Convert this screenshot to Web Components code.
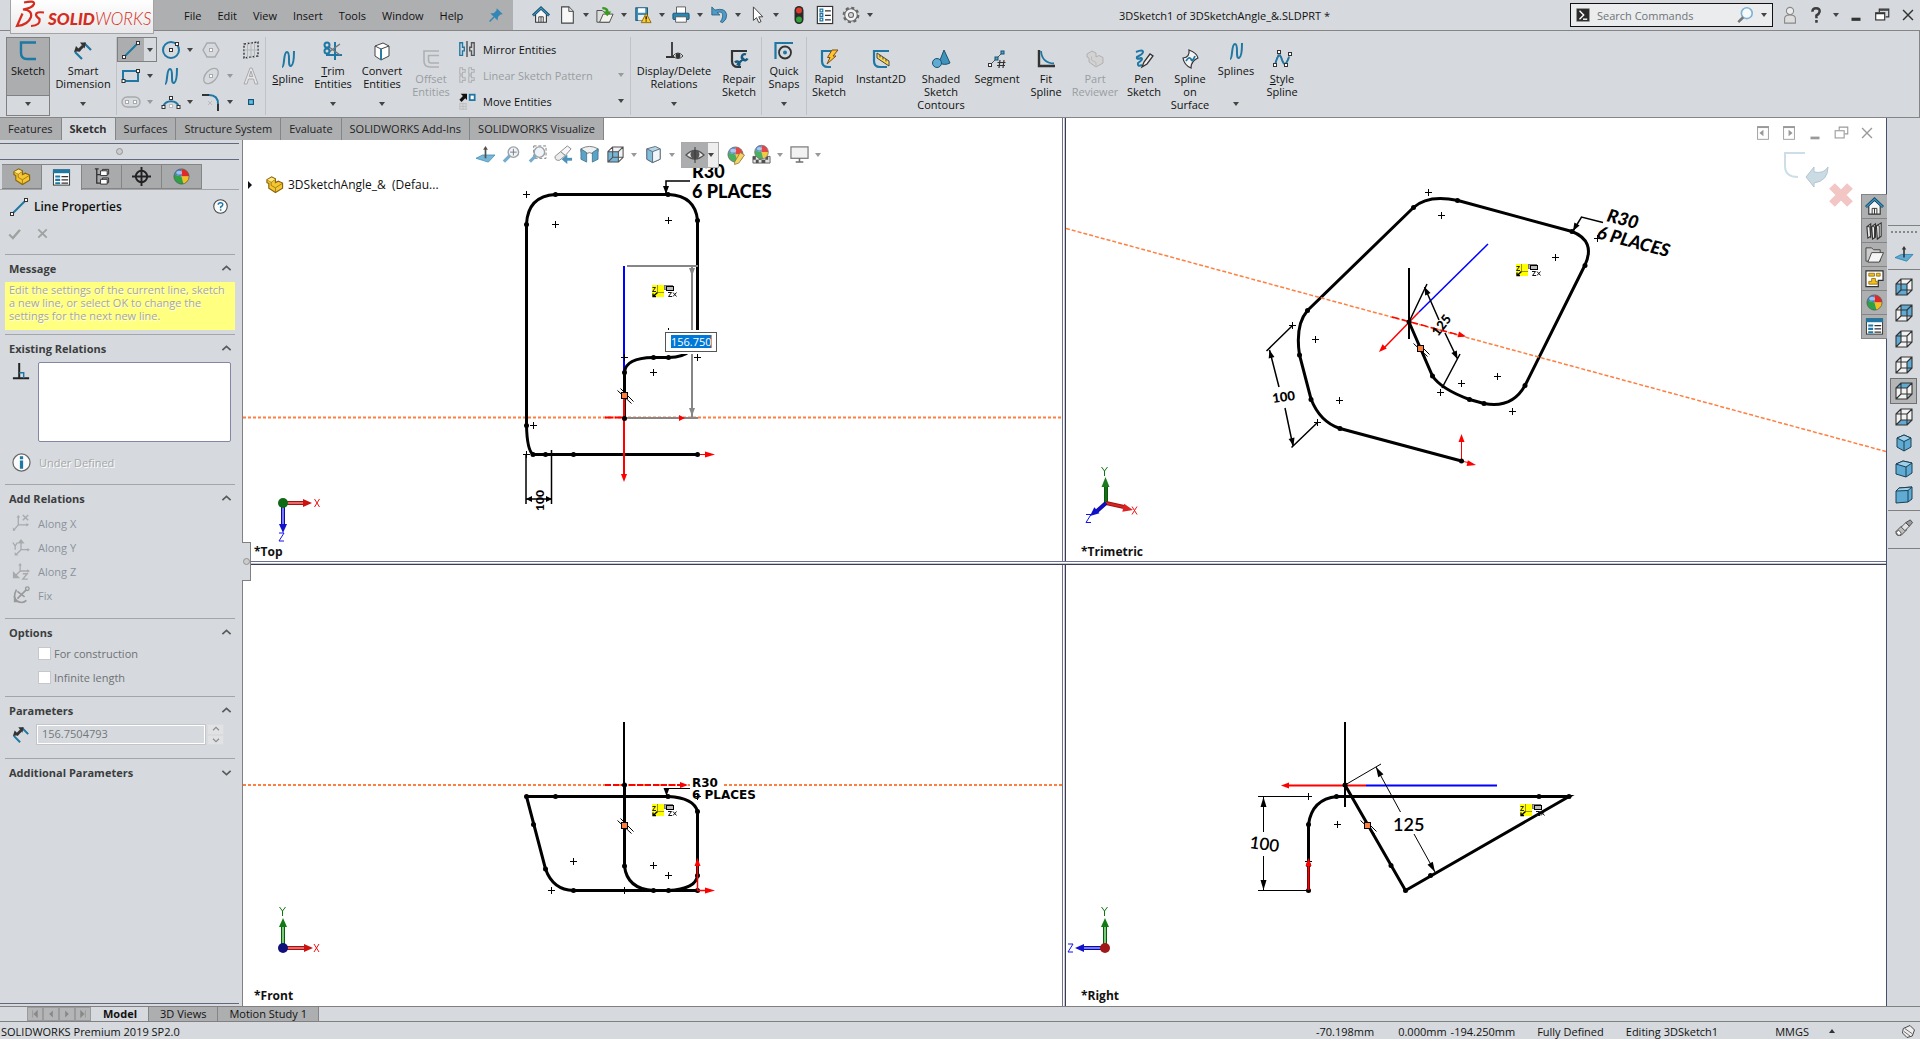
<!DOCTYPE html>
<html lang="en">
<head>
<meta charset="utf-8">
<title>3DSketch1 of 3DSketchAngle_&amp;.SLDPRT *</title>
<style>
  html, body { margin: 0; height: 100%; }
  body { background: #d6dade; color: #111; font: 11px/13px "Open Sans", "Noto Sans", sans-serif; overflow: hidden; }
</style>
</head>
<body>
<sw-app></sw-app>
<script>
/* ---------- icon library (20 x 20 grid) ---------- */
const B = '#1f77a4', K = '#333', G = '#a9a9ab';
const line = (d, c = K, w = 1.5) => `<path d="${d}" fill="none" stroke="${c}" stroke-width="${w}"/>`;
const dot = (x, y, c = K, f = '#fff') => `<rect x="${x - 1.5}" y="${y - 1.5}" width="3" height="3" fill="${f}" stroke="${c}"/>`;
const faces = {
  front: '2,7 13,7 13,18 2,18', back: '7,2 18,2 18,13 7,13', left: '2,7 7,2 7,13 2,18',
  right: '13,7 18,2 18,13 13,18', top: '2,7 7,2 18,2 13,7', bottom: '2,18 7,13 18,13 13,18'
};
const wire = f => `<rect x="7" y="2" width="11" height="11" fill="#f2f2f2"/><rect x="2" y="7" width="11" height="11" fill="#f2f2f2"/>
  <polygon points="${faces[f]}" fill="#5fabd3"/>${line('M7 2H18V13H7ZM2 7H13V18H2ZM2 7L7 2M13 7L18 2M13 18L18 13M2 18L7 13', K, 1.1)}`;
const ball = `<circle cx="10" cy="10" r="8" fill="#ddd"/><path d="M10 10V2A8 8 0 0 0 2.3 8Z" fill="#3d7fd0"/><path d="M10 10V2A8 8 0 0 1 18 10Z" fill="#e02828"/><path d="M10 10L18 10A8 8 0 0 1 12 17.7Z" fill="#f2c01c"/><path d="M10 10L12 17.7A8 8 0 0 1 2.3 8Z" fill="#2da144"/><circle cx="10" cy="10" r="8" fill="none" stroke="#555" stroke-width=".8"/><ellipse cx="7.5" cy="6" rx="3" ry="2" fill="#fff" opacity=".5"/>`;
const glass = `<circle cx="12" cy="7.5" r="5.5" fill="#eef3f7" stroke="#8b9299" stroke-width="1.5"/><path d="M8 11.5L2 17.5" stroke="#5f9fc6" stroke-width="3.4"/>`;
const part = `<path d="M2 5L7 2L11 4V8L14 6.500L18.500 8.500V14L11 18.500L4 14V9L2 8Z" fill="#f4c631" stroke="#8a6410" stroke-width="1.200"/><path d="M2 5L6.500 7.500V11L11 13.500V18M6.500 7.500L11 4.500M11 13.500L18 9" fill="none" stroke="#a87a12" stroke-width="1"/><path d="M2.500 5L7 2.500L10.500 4.500L6.500 7Z" fill="#ffe886"/>`;
const list = `<rect x="1.500" y="2" width="17" height="16" fill="#fff" stroke="${K}"/><rect x="1" y="1.500" width="18" height="4" fill="${B}"/>${line('M4 8.500h4v1h-4zM4 12h4v1h-4zM4 15.500h4v1h-4z', B, 1.2)}${line('M10 9H17M10 12.500H17M10 16H17', K, 1.3)}`;
const axes = `${line('M7 12V3M7 12H17M7 12L2 18', G, 1.4)}<path d="M5 4l2-3 2 3zM16 10l3 2-3 2zM1 19v-4l3 3z" fill="${G}"/>`;
const spline = line('M4 18C7 18 5 3 9 3C13 3 9 18 13 17C16 16 16 8 16 2', B, 2);
const I = {
  sketch: line('M18 1.500H3V12Q3 18 9 18H18', B, 2.4),
  smart: `<path d="M2 11L9 18M11 2L18 9" stroke="${B}" stroke-width="2.200"/>${line('M5 10L10 5', K, 3)}<path d="M1 11l2-6 5 5zM7 1.500l6 0-1.500 6z" fill="${K}"/>`,
  line: `${line('M3 17L17 3', B, 2)}${dot(3, 17)}${dot(17, 3)}`,
  circle: `<circle cx="10" cy="10" r="8" fill="none" stroke="${B}" stroke-width="2"/>${dot(10, 10)}${dot(16, 4)}`,
  poly: `<path d="M6 3H14L18 10L14 17H6L2 10Z" fill="none" stroke="${G}" stroke-width="1.4"/>${dot(10, 10, G)}`,
  plane: `<path d="M3 4L17 2V16L3 18Z" fill="none" stroke="${K}" stroke-width="1.400" stroke-dasharray="2 1.500"/><path d="M10 2V18M3 10H17M6.500 3V18M13.500 3V18" stroke="#b5b5b5" fill="none"/>`,
  rect: `<rect x="2" y="5" width="15" height="10" fill="none" stroke="${B}" stroke-width="2"/>${dot(2.500, 15)}${dot(17, 5)}`,
  spline,
  ellipse: `<ellipse cx="10" cy="10" rx="9" ry="5.500" transform="rotate(-48 10 10)" fill="none" stroke="${G}" stroke-width="1.400"/>${dot(10, 10, G)}`,
  text: `<path d="M3 18L9 2H11L17 18H14L12.500 13H7.500L6 18ZM8.300 10.500H11.700L10 5Z" fill="#e6e6e6" stroke="${G}"/>`,
  slot: `<rect x="1" y="5" width="18" height="10" rx="5" fill="none" stroke="${G}" stroke-width="1.400"/>${dot(6, 10, G)}${dot(14, 10, G)}`,
  arc: `${line('M2 15A8.500 8.500 0 0 1 18 15', B, 2)}${dot(2.500, 15)}${dot(17.500, 15)}${dot(10, 6)}${dot(10, 14, '#bbb')}`,
  fillet: `${line('M1 3H8', K, 2)}${line('M8 3Q17 3 17 12', B, 2)}${line('M17 12V19', K, 2)}${line('M7 9l4 4M11 9l-4 4', '#bbb', 1)}`,
  point: `<rect x="7" y="7" width="6" height="6" fill="#5cc0e8" stroke="#134e6e" stroke-width="1.400"/>`,
  trim: `${line('M12 1V19M3 14H19', B, 2)}${line('M6 6L17 14M6 11L17 3', '#777', 1.5)}<circle cx="4" cy="4" r="2.500" fill="none" stroke="${B}" stroke-width="2"/><circle cx="4" cy="10" r="2.500" fill="none" stroke="${B}" stroke-width="2"/>`,
  convert: `<path d="M3 5L11 2L17 5V15L9 19L3 15Z" fill="#fff" stroke="#444"/><path d="M3 5L9 8V19M9 8L17 5" fill="none" stroke="#444"/>${line('M9 8V19', B, 1.8)}`,
  offset: `${line('M18 2H3V12Q3 18 9 18H18', '#b0b0b2', 1.6)}${line('M18 6.500H7.500V11Q7.500 14 10 14H18', '#b0b0b2', 1.6)}`,
  mirror: `${line('M10 1V19', K, 1.3)}${line('M2 3H5V8H7V12H5V17H2Z', B, 1.5)}${line('M18 3H15V8H13V12H15V17H18Z', '#555', 1.5)}`,
  pattern: line('M2 2h3v2h3v3h-3v2h-3zM12 2h3v2h3v3h-3v2h-3zM2 11h3v2h3v3h-3v2h-3zM12 11h3v2h3v3h-3v2h-3z', '#b0b0b2', 1.2),
  move: `<path d="M3 2H10V9L8 7L4 11L1.500 8.500L5.500 4.500Z" fill="#111"/><rect x="13" y="3" width="5.500" height="6" fill="#fff" stroke="${B}" stroke-width="2"/><path d="M2 13H9M2 16H9M2 19H9M2 12V20M5.500 12V20M9 12V20" stroke="#bbb"/>`,
  display: `${line('M2 16H12M8 16V1', K, 1.8)}<path d="M9 15Q14 9 19 15Q14 20 9 15Z" fill="#fff" stroke="${K}"/><circle cx="14" cy="14.800" r="2.500" fill="${K}"/>`,
  repair: `${line('M18 2H3V12Q3 18 9 18H12', K, 2.2)}<path d="M8 16L15 9M17 5.500a3 3 0 1 0 1.500 4M6 13.500a2.500 2.500 0 1 1 3.500 3.500" fill="none" stroke="#175a80" stroke-width="2.400"/>`,
  snaps: `${line('M1.500 18V2H19', B, 2.2)}<circle cx="11" cy="11.500" r="6" fill="none" stroke="${K}" stroke-width="1.800"/><circle cx="11" cy="11.500" r="2" fill="${B}"/>`,
  rapid: `${line('M18 2H3V12Q3 18 9 18H12', B, 2.2)}<path d="M13 1H19L14 7H17L8 15L11 8.500H8.500Z" fill="#ffc52e" stroke="#7e4a10"/>`,
  instant: `${line('M18 2H3V12Q3 18 9 18H16', B, 2.2)}<path d="M6 4L18 12V17L6 9Z" fill="#ffd84a" stroke="#444"/><path d="M9 6v2.500M12 8v2.500M15 10v2.500" stroke="#444"/>`,
  shaded: `<path d="M13 1L19 14Q13 17 8 13.500Z" fill="#3f93bd" stroke="#1d5270"/><circle cx="6" cy="14" r="4.500" fill="#5fabd3" stroke="#1d5270"/>`,
  segment: `${line('M3 16L16 3', '#555', 1)}${dot(3, 16)}${dot(9.500, 9.500, '#134e6e', '#4aa8d0')}${dot(15.500, 3.500, '#134e6e', '#4aa8d0')}${line('M13 11L12 19M17 11L16 19M10.500 13.500H18.500M10 16.500H18', K, 1.2)}`,
  fit: `${line('M3 1V17H19', K, 2.4)}${line('M5 2Q6 14 18 14.500', B, 1.8)}`,
  partrev: `<path d="M2 5L7 2L11 4V8L14 6.500L18 8.500V14L11 18L4 13V9L2 8Z" fill="#d2d2d2" stroke="#b0b0b0"/><path d="M6.500 7.500V11L11 13.500V18" fill="none" stroke="#bbb"/>`,
  pen: `${line('M2 3Q9 0 9 3Q9 5 3 8Q2 11 7 9Q10 10 4 14Q3 18 8 16', B, 2)}<path d="M8 18L10 13L16 5L19 7L13 15Z" fill="#eee" stroke="${K}" stroke-width="1.300"/>`,
  surface: `<path d="M3 9Q10 8 9 1Q17 4 18 9Q11 12 11 19Q4 16 3 9Z" fill="#f3f3f3" stroke="${K}" stroke-width="1.200"/>${line('M6 12Q9 7 11 10Q12 14 15 7', B, 1.8)}`,
  style: `${line('M3 16L7 3L13 17L18 5', '#666', 1)}${line('M3 16Q7 0 10 11Q13 20 17 8', B, 2)}${dot(3, 16)}${dot(7, 3)}${dot(14, 16)}${dot(18, 5)}`,
  pin: `<path d="M11 1.500L18.500 9L15.500 9.500L12.500 12.500L12 17L3 8L7.500 7.500L10.500 4.500Z" fill="#3287b5"/>${line('M7.500 12.500L2 18', '#3287b5', 1.8)}`,
  home: `<path d="M4 9V18H16V9L10 3.500Z" fill="#f6f6f6" stroke="${K}" stroke-width="1.200"/><path d="M1 10.500L10 2L19 10.500" fill="none" stroke="#134e6e" stroke-width="3"/><path d="M1.500 10.300L10 2.300L18.500 10.300" fill="none" stroke="#3d9ac6" stroke-width="1.200"/><path d="M7.500 18V12H12.500V18M10 12V18" fill="none" stroke="${K}"/>`,
  doc: `<path d="M4 1H12L17 6V19H4Z" fill="#f7f7f7" stroke="#444" stroke-width="1.200"/><path d="M12 1V6H17" fill="#ddd" stroke="#444"/>`,
  open: `<path d="M1 5H7L9 7H15V18H1Z" fill="#ddd" stroke="#444"/><path d="M4 18L8 9H19L15 18Z" fill="#f4f4ee" stroke="#444"/><path d="M7 1Q14 1 14 6H17L12.500 11.500L8 6H11Q11 3.500 7 3.500Z" fill="#3c9a1e"/>`,
  save: `<rect x="2" y="2" width="13" height="14" fill="#3f8fb8" stroke="#134e6e"/><rect x="4.500" y="2.500" width="8" height="5" fill="#fff"/><rect x="4.500" y="10" width="8" height="6" fill="#eee"/><path d="M13.500 8L19 18.500H8Z" fill="#ffc928" stroke="#8a6410"/>${line('M13.500 11.500V15M13.500 16V17.300', '#111', 1.5)}`,
  print: `<path d="M5 8V1H15V8" fill="#fff" stroke="#555"/><rect x="1" y="8" width="18" height="7" rx="1" fill="#2b86b3" stroke="#134e6e"/><path d="M4 12H16V18H4Z" fill="#fff" stroke="#555"/>`,
  undo: `<path d="M2 1V10H11L8 7.200Q15 5 14 12Q13.500 15 11.500 17.500L14 18.500Q19 15 18.500 9.500Q17 1.500 5.500 4.500Z" fill="#4e9bc9" stroke="#1d5270" stroke-width=".8"/>`,
  cursor: `<path d="M6 1V16L9.500 13L12 18.500L14.500 17.300L12 12H16.500Z" fill="#fff" stroke="#444" stroke-width="1.100"/>`,
  traffic: `<rect x="5" y="0" width="10" height="20" rx="5" fill="#2a2a2a"/><circle cx="10" cy="5" r="3.300" fill="#e03a2f"/><circle cx="10" cy="15" r="3.300" fill="#2fa23a"/>`,
  options: `<rect x="1.500" y=".500" width="17" height="19" fill="#fff" stroke="${K}" stroke-width="1.300"/>${line('M4.500 3.500h3v3h-3zM4.500 8.500h3v3h-3zM4.500 13.500h3v3h-3z', B, 1.4)}${line('M10 5.500H16.500M10 10.500H16.500M10 15.500H16.500', K, 1.4)}`,
  gear: `<circle cx="10" cy="10" r="8" fill="none" stroke="#666" stroke-width="2.600" stroke-dasharray="3.400 2.883"/><circle cx="10" cy="10" r="7" fill="#f2f2f2" stroke="#666" stroke-width="1.200"/><circle cx="10" cy="10" r="2.800" fill="#d6dade" stroke="#666" stroke-width="1.200"/>`,
  prompt: `<rect x="1" y="1" width="18" height="18" fill="#2b2b2b" stroke="#888"/>${line('M5 4L11 10L5 16', '#fff', 2)}${line('M10 16H16', '#fff', 2)}`,
  search: `<circle cx="12" cy="8" r="6" fill="#f6fafd" stroke="#7fb2d2" stroke-width="1.800"/><path d="M8 12.500L2.500 18" stroke="#777" stroke-width="2.800"/>`,
  user: `<circle cx="10" cy="5.500" r="4" fill="#ececec" stroke="#888" stroke-width="1.200"/><path d="M4 19V14Q4 10 10 10Q16 10 16 14V19Z" fill="#ddd" stroke="#888" stroke-width="1.200"/>`,
  question: line('M6 6.500Q6 2.500 10 2.500Q14.500 2.500 14 6.500Q13.500 9 10.500 10.500V13.500M10.500 15.500V18.500', '#3c3c3c', 2.8),
  min: `<rect x="5" y="13" width="10" height="3.500" fill="#333"/>`,
  restore: `<path d="M7 7V3.500H17.500V12H14" fill="none" stroke="#333" stroke-width="1.300"/><rect x="3" y="7.500" width="10" height="8" fill="#fff" stroke="#333" stroke-width="1.300"/><path d="M3 8.500H13M7 4.500H17" stroke="#333" stroke-width="1.500"/>`,
  close: line('M4.500 4.500L15.500 15.500M15.500 4.500L4.500 15.500', '#333', 1.6),
  mincol: `<rect x="5" y="14" width="10" height="3" fill="#999"/>`,
  restcol: `<path d="M8 7V3.500H17.500V11H14" fill="none" stroke="#999" stroke-width="1.200"/><rect x="3.500" y="7.500" width="10" height="8" fill="#fff" stroke="#999" stroke-width="1.200"/>`,
  closecol: line('M4.500 4.500L15.500 15.500M15.500 4.500L4.500 15.500', '#999', 1.5),
  dockl: `<rect x="4" y="3" width="12" height="14" fill="#fff" stroke="#999"/><path d="M3.500 3.500H16.500" stroke="#999" stroke-width="2"/><path d="M10.500 6.500V13.500L6 10Z" fill="#999"/>`,
  dockr: `<rect x="4" y="3" width="12" height="14" fill="#fff" stroke="#999"/><path d="M3.500 3.500H16.500" stroke="#999" stroke-width="2"/><path d="M9.500 6.500V13.500L14 10Z" fill="#999"/>`,
  part, list, ball, glass,
  config: `${line('M3 2H7M5 2V17H9M5 8H9', K, 1.4)}<path d="M9 4H16V9H9ZM9 13H16V18H9Z" fill="#fff" stroke="${K}"/><path d="M11 4V2.500H17.500V7.500H16M11 13V11.500H17.500V16.500H16" fill="none" stroke="${K}"/>`,
  target: `<circle cx="10" cy="10" r="6" fill="none" stroke="#222" stroke-width="2"/>${line('M10 0V20M0 10H20', '#222', 2)}`,
  help: `<circle cx="10" cy="10" r="9" fill="#fafafa" stroke="#444" stroke-width="1.400"/>${line('M7 7.800Q7 5 10 5Q13.300 5 13 7.800Q12.500 9.500 10.200 10.500V12.300M10.200 13.500V15.800', B, 2)}`,
  check: `<path d="M2 11L4 9L7.500 12.500L16 3L18.500 4.500L8 17Z" fill="#a0a0a0"/>`,
  cancel: line('M3.500 3.500L16.500 16.500M16.500 3.500L3.500 16.500', '#a0a0a0', 2.8),
  up: line('M2.500 13L10 6L17.500 13', '#5a5a5a', 3),
  down: line('M2.500 7L10 14L17.500 7', '#5a5a5a', 3),
  perp: `${line('M1 18H19M8 18V1', '#222', 2.2)}${line('M8 12H13V18', B, 1.6)}`,
  info: `<circle cx="10" cy="10" r="9" fill="#fbfbfb" stroke="#666" stroke-width="1.300"/><path d="M10 3.500V6.500M10 8V16.500" stroke="${B}" stroke-width="3.400"/>`,
  ax: `${axes}${line('M12 1L18 7M18 1L12 7', G, 1.5)}`,
  ay: `${line('M10 13V5M10 13H18M10 13L5 18', G, 1.4)}<path d="M6 6l4-5 4 5zM17 11l3 2-3 2zM3 19.500v-4l4 4z" fill="${G}"/>${line('M1 5L3.500 9L6 5M3.500 9V13', G, 1.5)}`,
  az: `${line('M9 10V3M9 10H18M9 10L4 15', G, 1.4)}<path d="M7 4l2-3 2 3zM17 8l3 2-3 2zM1 18v-8l8 8z" fill="${G}"/>${line('M12 13H17L12 19H17.500', G, 1.5)}`,
  fix: `${line('M5 4Q0 13 6 17Q12 20 16 16', '#999', 1.8)}${line('M16 4L6 14M6 6L14 12', '#999', 1.8)}<circle cx="17" cy="3" r="2" fill="none" stroke="#999" stroke-width="1.500"/><path d="M2 18V11L8 18Z" fill="#999"/>`,
  normal: `<path d="M0 14L7 10.500H20L13 18Z" fill="#5fabd3" stroke="#1f77a4" stroke-width=".8"/>${line('M10 14V3', K, 1.8)}<path d="M7.500 5L10 1L12.500 5Z" fill="${K}"/>`,
  zoomfit: `${glass}${line('M12 4V11M8.500 7.500H15.500', '#666', 1)}`,
  zoomarea: `<rect x="6" y="1" width="13" height="13" fill="none" stroke="#666" stroke-dasharray="3 2"/>${glass}`,
  prev: `<path d="M1 12L7 7L12 11L6 16Q1 17 1 12Z" fill="#e9e9e9" stroke="#777"/><path d="M7 7L14 1L18 4L12 11Z" fill="#f6f6f6" stroke="#777"/>${line('M13 15H19', '#2b7fae', 3)}<path d="M14 10L8 15L14 20Z" fill="#2b7fae"/>`,
  section: `<path d="M1 4Q10 -1 19 4V7L13 9Q10 7 7 9L1 7Z" fill="#eee" stroke="#666"/><path d="M1 4L7 8V18L1 15ZM13 8L19 4V15L13 18Z" fill="#3f93bd" stroke="#1d5270" stroke-width=".8"/>`,
  orient: wire('front'),
  cubes: `<path d="M3 4L12 1.500L17 4V15L9 18.500L3 15Z" fill="#a6cfe4" stroke="#456"/><path d="M3 4L9 7V18.500L3 15Z" fill="#6db2d6" stroke="#456"/><path d="M9 7L17 4V15L9 18.500Z" fill="#eef5f9" stroke="#456"/>`,
  eye: `<path d="M1 10Q10 1 19 10Q10 18 1 10Z" fill="#f3f3f3" stroke="#444" stroke-width="1.300"/><circle cx="10" cy="9.500" r="4.500" fill="#444"/><path d="M10 2V18" stroke="#222"/>`,
  appear: `${ball}<path d="M9 18L15 8L19.500 10.500L13.500 19L9 20.500Z" fill="#f2cf4a" stroke="#7a5a10" stroke-width=".8"/>`,
  scene: `<path d="M1 12H19V19H1Z" fill="#ddd" stroke="#444"/><path d="M1 12h3v3.500H1zM7 12h3v3.500H7zM14 12h3v3.500h-3zM4 15.500h3V19H4zM10 15.500h4V19h-4z" fill="#333"/><g transform="translate(1 -1.500) scale(.9)">${ball}</g>`,
  monitor: `<rect x="1" y="2" width="18" height="12" fill="#f0f0f0" stroke="#666" stroke-width="1.300"/>${line('M10 14V17.500M6 18H14', '#555', 1.6)}`,
  library: `<path d="M2 6L6 3V16L3 18ZM7 6L11 3V17L8 19ZM12 5L17 2V16L13 19Z" fill="#eee" stroke="${K}" stroke-width="1.200"/><path d="M2 6H5L6 18M8 6H10V18M13 5H15V18" fill="none" stroke="${K}"/>`,
  folder: `<path d="M1 3H7L9 5H16V17H1Z" fill="#ccc" stroke="#444"/><path d="M3 18L7 8H19.500L15 18Z" fill="#f5f5f5" stroke="#444"/>`,
  palette: `<path d="M1 2H19V12H14V18.500H1Z" fill="#fff" stroke="${K}" stroke-width="1.300"/><path d="M4 4.500H10V7.500H4ZM12 4.500H16V7.500H12ZM7 10H11V13H13V16H4V13H7Z" fill="#f2c01c" stroke="#8a6410" stroke-width=".8"/>`,
  iso: `<path d="M10 2L17 5V14L10 18L3 14V5Z" fill="#5fabd3" stroke="#1d3f55"/><path d="M3 5L10 8.500L17 5L10 2Z" fill="#9fd0e8" stroke="#1d3f55"/><path d="M10 8.500V18" stroke="#1d3f55"/>`,
  tri: `<path d="M2 5L9 2L18 4V14L12 18L2 15Z" fill="#5fabd3" stroke="#1d3f55"/><path d="M2 5L12 8L18 4L9 2Z" fill="#9fd0e8" stroke="#1d3f55"/><path d="M12 8V18" stroke="#1d3f55"/>`,
  di: `<path d="M2 6L5 3L18 2V14L14 17L2 18Z" fill="#5fabd3" stroke="#1d3f55"/><path d="M2 6L14 5.500L18 2L5 3Z" fill="#9fd0e8" stroke="#1d3f55"/><path d="M14 5.500V17" stroke="#1d3f55"/>`,
  scope: `<path d="M1 14L7 8L13 12L7 18Q1 20 1 14Z" fill="#bdbdbd" stroke="#444"/><path d="M7 9L12 4L16 8L11 13Z" fill="#e2e2e2" stroke="#444"/><path d="M12 4L17 1L19.500 4L16 8Z" fill="#9a9a9a" stroke="#444"/><ellipse cx="4.200" cy="15.500" rx="2.200" ry="2.800" transform="rotate(-40 4.200 15.500)" fill="#fff" stroke="#555"/>`,
  tag: `<path d="M3 6L12 2L18 8L15 16L8 18L2 12Z" fill="#eee" stroke="#444" stroke-width="1.300"/>${line('M5 6L15 13M4 10L12 16', '#444', 1)}`,
  first: `<path d="M6 4V16M14 4V16L8 10Z" fill="#888" stroke="#888"/>`, back: `<path d="M13 4V16L7 10Z" fill="#888"/>`,
  next: `<path d="M7 4V16L13 10Z" fill="#888"/>`, last: `<path d="M14 4V16M6 4V16L12 10Z" fill="#888" stroke="#888"/>`
};
for (const f in faces) I['v' + f] = wire(f);

class Base extends HTMLElement {
  connectedCallback() {
    if (this.shadowRoot) return;
    this.attachShadow({ mode: 'open' }).innerHTML = `<style>
      *{box-sizing:border-box} button{font:inherit;color:inherit;background:none;border:0;padding:0;margin:0}
      ${this.css()}</style>${this.html()}`;
  }
}
const def = (tag, css, html) => customElements.define(tag, class extends Base {
  css() { return typeof css === 'function' ? css(this) : css; }
  html() { return typeof html === 'function' ? html(this) : html; }
});
const icon = (n, s = 20) => `<sw-icon name="${n}" size="${s}"></sw-icon>`;
const drop = `<sw-drop></sw-drop>`;

def('sw-icon', el => `:host{display:inline-block;flex:none;width:${el.getAttribute('size')}px;height:${el.getAttribute('size')}px} svg{display:block;width:100%;height:100%;overflow:visible}`,
  el => `<svg viewBox="0 0 20 20" aria-hidden="true">${I[el.getAttribute('name')]}</svg>`);
def('sw-drop', ':host{display:inline-block;flex:none;width:0;height:0;border:3px solid transparent;border-top:4px solid #444;border-bottom:0} :host([off]){border-top-color:#999}', '');

/* ---------- title bar ---------- */
def('sw-logo', ':host{display:block;width:144px;height:34px;background:linear-gradient(#fff,#e8e8ea);border:1px solid #a4a4a4;border-top:0} svg{display:block} text{font-family:Lato,sans-serif;font-size:17px;font-style:italic;fill:#d62c20}',
  `<svg width="142" height="33" viewBox="11 0 142 33"><g fill="none" stroke="#d62c20" stroke-width="2.200"><path d="M24 2.500Q35 0 34 4Q32.500 8 23 9.500Q32.500 10 31 17Q28 25 17 26L22.500 13.500"/><path d="M44 12.500Q36 11.500 36 14.500Q36 16.500 39.500 19Q40.500 25.500 31 26"/></g><text x="48" y="25"><tspan font-weight="900">SOLID</tspan><tspan font-weight="300">WORKS</tspan></text></svg>`);
def('sw-titlebar', `
  :host{display:flex;align-items:stretch;height:31px;border-bottom:1px solid #858585;position:relative;z-index:3}
  sw-logo{margin-left:10px;flex:none}
  nav{display:flex;align-items:center;gap:16px;width:359px;flex:none;background:#aeafb1;padding-left:30px}
  nav sw-icon{margin-left:9px}
  .quick{display:flex;align-items:center;gap:6px;padding-left:18px;width:372px;flex:none}
  .quick button{display:flex;justify-content:center;width:20px;height:18px}
  .quick .wide{margin-left:4px}
  h1{flex:1;font:inherit;margin:0;text-align:center;align-self:center;padding-left:110px;white-space:pre}
  .search{display:flex;align-items:center;align-self:center;width:203px;height:24px;border:1px solid #111;background:#ebecee;padding:0 5px;gap:7px;margin-left:116px;flex:none}
  .search input{flex:1;min-width:0;border:0;background:none;font:inherit;padding:0;outline:0}
  .search input::placeholder{color:#6f7378;opacity:1}
  .win{display:flex;align-items:center;gap:8px;width:147px;flex:none;padding-left:8px}
  .win button{display:block;height:18px}`,
  `<sw-logo></sw-logo><nav>${['File', 'Edit', 'View', 'Insert', 'Tools', 'Window', 'Help'].map(t => `<button>${t}</button>`).join('')}${icon('pin', 16)}</nav>
  <div class="quick">${[['home'], ['doc', 1], ['open', 1], ['save', 1], ['print', 1], ['undo', 1], ['cursor', 1], ['traffic'], ['options'], ['gear', 1]].map(([n, d]) => `<button${n === 'traffic' ? ' class="wide"' : ''} aria-label="${n}">${icon(n, 18)}</button>${d ? drop : ''}`).join('')}</div>
  <h1>3DSketch1 of 3DSketchAngle_&amp;.SLDPRT *</h1>
  <div class="search">${icon('prompt', 14)}<input type="text" placeholder="Search Commands" aria-label="Search Commands">${icon('search', 18)}${drop}</div>
  <div class="win">${['user', 'question'].map(n => `<button aria-label="${n}">${icon(n, 18)}</button>`).join('')}${drop}${['min', 'restore', 'close'].map(n => `<button aria-label="${n}">${icon(n, 18)}</button>`).join('')}</div>`);

/* ---------- ribbon ---------- */
def('sw-tool', el => `
  :host{display:block;flex:none;width:${el.getAttribute('w')}px}
  button{display:flex;flex-direction:column;align-items:center;width:100%;height:79px;padding-top:${el.hasAttribute('low') ? 12 : 4}px;text-align:center}
  sw-icon{margin-bottom:3px} span{white-space:nowrap}
  :host([off]) span{color:#999da1}
  sw-drop{margin-top:auto;margin-bottom:10px}
  :host([on]) button{background:linear-gradient(#acadaf 57px,#808080 57px 58px,#d6dade 58px);border:1px solid #808080;padding-top:3px}
  :host([on]) sw-drop{margin-bottom:9px}`,
  el => `<button>${icon(el.getAttribute('icon'))}<span>${el.innerHTML}</span>${el.hasAttribute('menu') ? drop : ''}</button>`);
const tool = (t, ic, w, f = '') => `<sw-tool icon="${ic}" w="${w}" ${f}>${t}</sw-tool>`;
def('sw-ribbon', `
  :host{display:flex;height:87px;padding:6px 0 0 6px;border-bottom:1px solid #858585;border-right:1px solid #858585}
  hr{margin:0;width:1px;height:78px;border:0;background:#c0c3c6;flex:none}
  .grid{display:grid;grid-template:repeat(3,26px)/40px 40px 40px 27px;width:148px}
  .grid div{display:flex;align-items:center;gap:6px;padding-left:4px}
  .grid button{height:20px;width:20px;display:flex;align-items:center;justify-content:center}
  .grid .on{padding:0 0 0 3px;border:1px solid #808080;background:linear-gradient(90deg,#acadaf 26px,#d6dade 26px);height:25px}
  .list{width:176px;display:grid;grid-template-rows:repeat(3,26px)}
  .list button{display:flex;align-items:center;gap:7px;padding:0 6px 2px 4px;text-align:left}
  .list span{flex:1}.off{color:#999da1}`,
  `${tool('Sketch', 'sketch', 44, 'on menu')}${tool('Smart<br>Dimension', 'smart', 66, 'menu')}<hr>
  <div class="grid">${[['line', 1], ['circle', 1], ['poly'], ['plane'], ['rect', 1], ['spline'], ['ellipse', 2], ['text'], ['slot', 2], ['arc', 1], ['fillet', 1], ['point']].map(([n, d], i) => `<div${i ? '' : ' class="on"'}><button aria-label="${n}">${icon(n, i === 11 ? 16 : 20)}</button>${d ? (d === 2 ? '<sw-drop off></sw-drop>' : drop) : ''}</div>`).join('')}</div><hr>
  ${tool('<u>S</u>pline', 'spline', 44, 'low')}${tool('<u>T</u>rim<br>Entities', 'trim', 46, 'menu')}${tool('Convert<br>Entities', 'convert', 52, 'menu')}${tool('Offset<br>Entities', 'offset', 46, 'low off')}
  <div class="list"><button>${icon('mirror', 18)}<span>Mirror Entities</span></button><button class="off">${icon('pattern', 18)}<span>Linear Sketch Pattern</span><sw-drop off></sw-drop></button><button>${icon('move', 18)}<span>Move Entities</span>${drop}</button></div><hr>
  ${tool('Display/Delete<br>Relations', 'display', 86, 'menu')}${tool('Repair<br>Sketch', 'repair', 44, 'low')}<hr>${tool('Quick<br>Snaps', 'snaps', 44, 'menu')}<hr>
  ${tool('Rapid<br>Sketch', 'rapid', 44, 'low')}${tool('Instant2D', 'instant', 60, 'low')}${tool('Shaded<br>Sketch<br>Contours', 'shaded', 60, 'low')}${tool('Segment', 'segment', 52, 'low')}${tool('Fit<br>Spline', 'fit', 46, 'low')}${tool('Part<br>Reviewer', 'partrev', 52, 'low off')}${tool('Pen<br>Sketch', 'pen', 46, 'low')}${tool('Spline<br>on<br>Surface', 'surface', 46, 'low')}${tool('Splines', 'spline', 46, 'menu')}${tool('<u>S</u>tyle<br>Spline', 'style', 46, 'low')}`);

def('sw-command-tabs', `
  :host{display:flex;height:22px;border-bottom:1px solid #858585}
  button{background:#adaeb0;padding:0 8px 1px;border-right:1px solid #858585;color:#222;height:22px}
  .on{background:#d6dade;font-weight:700;color:#333}`,
  ['Features', 'Sketch', 'Surfaces', 'Structure System', 'Evaluate', 'SOLIDWORKS Add-Ins', 'SOLIDWORKS Visualize'].map(t => `<button role="tab"${t === 'Sketch' ? ' class="on"' : ''}>${t}</button>`).join(''));

/* ---------- property manager ---------- */
def('sw-section', `
  :host{display:block;border-top:1px solid #a3a5a7;margin:0 7px 0 5px}
  button{display:flex;width:100%;height:23px;padding:4px 3px 0 4px;align-items:center;justify-content:space-between;font-weight:700;color:#3b3d40}`,
  el => `<button aria-expanded="${!el.hasAttribute('shut')}"><span>${el.getAttribute('label')}</span>${icon(el.hasAttribute('shut') ? 'down' : 'up', 11)}</button><slot></slot>`);
def('sw-property-panel', `
  :host{display:flex;flex-direction:column;border-right:1px solid #808080;padding-top:22px;position:relative}
  .grip{margin:3px 3px 0 0;border:solid #62687e;border-width:1px 0;display:flex;justify-content:center;align-items:center;height:17px;flex:none}
  .grip i,.handle i{width:7px;height:7px;border-radius:50%;background:#ccc;border:1px solid #909295}
  .tabs{display:flex;padding:4px 0 0 2px;flex:none;border-bottom:1px solid #a3a5a7;height:30px;margin-right:3px}
  .tabs button{width:40px;height:25px;background:#a9aaac;border:1px solid #858585;border-left:0;display:flex;align-items:center;justify-content:center}
  .tabs .on{background:#d6dade;height:26px;border-bottom:0}
  header{display:flex;align-items:center;height:33px;padding:0 14px 0 9px;gap:5px;flex:none}
  h2{flex:1;margin:0;font-size:12px;font-weight:600}
  .ok{display:flex;align-items:center;gap:13px;padding:0 0 9px 7px;height:31px;flex:none}
  .ok button{width:15px;height:15px}
  .msg{margin:4px 0;height:48px;background:#ffff80;padding:1px 4px;color:#a7a78e;text-shadow:1px 1px #fff}
  .rel{display:flex;gap:8px;margin:4px 4px 0 7px}
  .rel select{flex:1;width:100px;height:80px;border:1px solid #8486a6;background:#fff;margin:0}
  .row{display:flex;align-items:center;height:24px;gap:8px;padding-left:7px;color:#8b929c}
  .info{height:40px;margin-bottom:2px;color:#a5a7aa;text-shadow:1px 1px #fff}
  .opt{padding-left:33px;gap:3px;color:#6e7175}
  .opt input{appearance:none;width:13px;height:13px;margin:0;border:1px solid #c5c7ca;background:#fff}
  .par{display:flex;align-items:center;gap:6px;padding-left:7px;margin-top:4px;height:21px}
  .par input{width:170px;height:21px;border:1px solid #c3c5c8;outline:1px solid #fff;outline-offset:-2px;background:#d6dade;color:#73777b;font:inherit;padding:0 5px 2px}
  .spin{display:flex;flex-direction:column;margin-left:-5px;width:17px;height:21px}.spin button{height:11px;background:#e8e8e8;border:1px solid #ddd;display:flex;align-items:center;justify-content:center;opacity:.6}
  .add{padding:3px 0 11px}.opts{padding-bottom:7px;margin-top:-1px}.pad{padding-bottom:13px}
  .foot{margin-top:auto;height:3px;border-top:1px solid #62687e;margin-right:3px}
  .handle{position:absolute;right:-9px;top:424px;width:9px;height:39px;z-index:2;background:#d6dade;border:1px solid #808080;border-left:0;display:flex;align-items:center;justify-content:center}`,
  `<div class="grip"><i></i></div>
  <div class="tabs">${['part', 'list', 'config', 'target', 'ball'].map((n, i) => `<button aria-label="${n}"${i === 1 ? ' class="on"' : ''}>${icon(n, 19)}</button>`).join('')}</div>
  <header>${icon('line', 20)}<h2>Line Properties</h2>${icon('help', 15)}</header>
  <div class="ok"><button aria-label="OK">${icon('check', 15)}</button><button aria-label="Cancel">${icon('cancel', 13)}</button></div>
  <sw-section label="Message"><div class="msg">Edit the settings of the current line, sketch<br>a new line, or select OK to change the<br>settings for the next new line.</div></sw-section>
  <sw-section label="Existing Relations"><div class="rel">${icon('perp', 18)}<select size="4" aria-label="Existing Relations"></select></div><div class="row info">${icon('info', 19)}<span>Under Defined</span></div></sw-section>
  <sw-section label="Add Relations"><div class="add">${[['ax', 'Along X'], ['ay', 'Along Y'], ['az', 'Along Z'], ['fix', 'Fix']].map(([n, t]) => `<button class="row">${icon(n, 18)}<span>${t}</span></button>`).join('')}</div></sw-section>
  <sw-section label="Options"><div class="opts"><label class="row opt"><input type="checkbox" disabled>For construction</label><label class="row opt"><input type="checkbox" disabled>Infinite length</label></div></sw-section>
  <sw-section label="Parameters"><div class="pad"><div class="par">${icon('smart', 18)}<input type="text" value="156.7504793" disabled aria-label="Length"><div class="spin"><button aria-label="More">${icon('up', 8)}</button><button aria-label="Less">${icon('down', 8)}</button></div></div></div></sw-section>
  <sw-section label="Additional Parameters" shut></sw-section>
  <div class="foot"></div><div class="handle"><i></i></div>`);

/* ---------- sketch views ---------- */
const O = '#ff7f40';
const plus = a => `<path d="${a.map(([x, y]) => `M${x - 3.5} ${y}h7M${x} ${y - 3.5}v7`).join('')}" stroke="#000" fill="none"/>`;
const nodes = a => a.map(([x, y]) => `<circle cx="${x}" cy="${y}" r="2.500"/>`).join('');
const arrow = (x, y, a, c = '#000', l = 8, w = 3) => `<path d="M0 0L${-l} ${w}V${-w}Z" fill="${c}" transform="translate(${x} ${y}) rotate(${a})"/>`;
const ln = (d, c = '#000', w = 1, x = '') => `<path d="${d}" fill="none" stroke="${c}" stroke-width="${w}" ${x}/>`;
const grab = (x, y) => `${ln(`M${x - 7} ${y - 5}l14 13M${x - 4} ${y - 7}l13 13`, '#000', 1)}<rect x="${x - 3}" y="${y - 3}" width="6" height="6" fill="${O}" stroke="#000"/>`;
const flag = (x, y) => `<g transform="translate(${x} ${y})"><rect width="12" height="12" fill="#ff0"/>${ln('M5.500 0V7.500H12', '#99902a', 1)}${ln('M.500 2.500H3.500L.500 6.500H4', '#222', 1)}${ln('M5.500 7.500L1 11.500M1 8.500V11.500H4', '#000', 1.300)}<rect x="12.500" y=".500" width="8" height="4" fill="#aaa" stroke="#777"/><rect x="14.500" y="1.500" width="7" height="4" fill="#bbb" stroke="#000"/>${ln('M16 7.500H19.500L16.500 11.500H20M21 7.500L24.500 11.500M24.500 7.500L21 11.500', '#111', 1)}</g>`;
const bar = (x1, y1, x2, y2, c1, c2) => ln(`M${x1} ${y1}L${x2} ${y2}`, c1, 4) + ln(`M${x1} ${y1}L${x2} ${y2}`, c2, 2);
const glyph = { X: (x, y) => ln(`M${x - 2.500} ${y - 4}L${x + 2.500} ${y + 4}M${x + 2.500} ${y - 4}L${x - 2.500} ${y + 4}`, '#e11', 1), Y: (x, y) => ln(`M${x - 3} ${y - 4}L${x} ${y}L${x + 3} ${y - 4}M${x} ${y}V${y + 5}`, '#0a7a0a', 1), Z: (x, y) => ln(`M${x - 2.500} ${y - 4}H${x + 2.500}L${x - 2.500} ${y + 4}H${x + 2.500}`, '#11e', 1) };
const R = ['#9c1515', '#e66'], N = ['#0c0c96', '#77f'], V = ['#0b570b', '#7c7'];

const VIEWS = {
  top: { box: '243 118 819 443', name: '*Top', nx: 254, ny: 556, art: `
    ${ln('M243 417.500H1062', O, 2, 'stroke-dasharray="3 2"')}
    ${ln('M624 266V372', '#00f', 2)}
    ${ln('M526.500 425V224Q528 196 555.500 194.500H669Q695 196 697.500 220V331Q697 357 669 357.500H653Q626 358 624.500 372V418M526.500 425Q527 450 533 454.500H697.500', '#000', 3)}
    ${ln('M627 266H698M692 266V418', '#868686', 2)}${ln('M624 418H698', '#868686', 2)}${arrow(692, 276, 90, '#868686', 8, 3)}${arrow(692, 416, 90, '#868686', 8, 3)}
    ${ln('M605 417.500H624', '#f00', 2, 'stroke-dasharray="8 2"')}${arrow(685, 418, 0, '#f00', 6, 3)}
    ${ln('M624 398V476', '#f00', 2)}${arrow(624, 482, 90, '#f00', 8, 3)}${ln('M697 454.500H706', '#f00', 1)}${arrow(715, 454.500, 0, '#f00', 10, 3)}
    ${nodes([[555.5, 194.500], [526.5, 224.500], [668, 194.500], [697.5, 220.500], [653.5, 357.500], [668.5, 357.500], [624.5, 372.500], [624.5, 418.500], [526.5, 425.500], [533, 454.500], [545.5, 454.500], [573.5, 454.500], [697.5, 454.500]])}
    ${plus([[526.5, 194.5], [555.5, 224.5], [668.5, 220.5], [624.5, 357.5], [697.5, 357.5], [653.5, 372.5], [533.5, 425.5], [526.5, 454.5], [668.5, 331.5]])}
    ${ln('M690 181H666V194', '#000', 1.500)}${arrow(666, 194, 90)}
    <text class="n" x="692" y="178">R30</text><text class="n" x="692" y="198">6 PLACES</text>
    ${ln('M526 455V504M551.500 450V504', '#000', 1.500)}${ln('M526 499H552', '#000', 1.500)}${arrow(526, 499, 180, '#000', 6)}${arrow(552, 499, 0, '#000', 6)}
    <text class="s" transform="translate(544 511) rotate(-90)">100</text>
    ${grab(624.500, 395.500)}${flag(652, 285)}
    ${bar(283, 503, 304, 503, ...R)}${arrow(312, 503, 0, '#c11', 9, 4)}${glyph.X(317, 503)}${bar(283, 503, 283, 524, ...N)}${arrow(283, 533, 90, '#11c', 9, 4)}${glyph.Z(281.500, 537)}<circle cx="283" cy="503" r="5" fill="#0f6a16"/>
    <rect x="665" y="330" width="54" height="24" fill="#fff"/>
    <foreignObject x="665" y="332" width="52" height="20"><input value="156.750" aria-label="Line length"></foreignObject>` },
  tri: { box: '1066 118 820 443', name: '*Trimetric', nx: 1081, ny: 556, art: `
    ${ln('M1461.500 461L1340 428.500Q1320 422 1311 399L1299.500 355Q1295 325 1307.500 310.500L1413.500 207.500Q1428 194 1458 200.500L1572 231.500Q1596 241 1585 265L1525 385.500Q1512 409 1484 403.500L1469.500 399.500Q1441 389 1432.500 376L1409 322', '#000', 3)}
    ${ln('M1409 268V339', '#000', 2)}${ln('M1488 244L1419 312', '#00f', 1.500)}${ln('M1419 312L1384 348', '#f00', 1.500)}${arrow(1379, 352, 135, '#f00')}
    ${ln('M1066 228.500L1886 451.500', O, 1.500, 'stroke-dasharray="4 2"')}${ln('M1392 317L1459 335', '#f00', 1.500, 'stroke-dasharray="7 3"')}${arrow(1466, 336.500, 15, '#f00')}
    ${ln('M1409 322L1427 284M1424.500 287L1439 320M1445 333L1457.500 359M1460 354L1442 388', '#000', 1.500)}${arrow(1424.500, 287, -115)}${arrow(1457.500, 359, 65)}
    <text class="d t" font-size="13" transform="translate(1438 337) rotate(-52)">125</text>
    ${ln('M1292.500 325.500L1266.500 351M1269.500 350L1279 387M1285 408L1293 446M1291.500 447.500L1317.500 422.500', '#000', 1.500)}${arrow(1269.500, 350, -105)}${arrow(1293.500, 446, 76)}
    <text class="d t" font-size="13" transform="translate(1273 403) rotate(-8)">100</text>
    ${ln('M1573 231L1581.500 217L1603 222.500', '#000', 1.500)}${arrow(1573, 231, 120)}
    <text class="n i" transform="translate(1606 221) rotate(15)">R30</text><text class="n i" transform="translate(1596 238) rotate(15)">6 PLACES</text>
    ${ln('M1461.500 461V442M1461.500 461L1470 463', '#f00', 1)}${arrow(1461.500, 434, -90, '#f00')}${arrow(1476, 465, 12, '#f00', 9)}
    ${nodes([[1461.5, 461], [1340, 428.5], [1311, 399.5], [1299.5, 355], [1307.5, 310.5], [1413.5, 207.5], [1457.5, 200.5], [1572, 231.5], [1585, 265.5], [1525, 385.5], [1484, 403.5], [1469.5, 399.5], [1432.5, 376], [1409, 322]])}
    ${plus([[1428.5, 192.5], [1441.5, 215.5], [1555.5, 257.5], [1597.5, 238.5], [1292.5, 325.5], [1315.5, 339.5], [1339.5, 400.5], [1317.5, 422.5], [1461.5, 383.5], [1440.5, 392.5], [1497.5, 376.5], [1512.5, 411.5]])}
    ${grab(1420.500, 348.500)}${flag(1516, 264)}
    ${ln('M1805 153H1785V166Q1785 177 1798 177', '#ccdfe9', 2)}<path d="M1806 177L1814 167V172Q1824 174 1828 167Q1828 181 1814 183V187Z" fill="#cbdbe4" stroke="#b3c6d1"/>
    ${ln('M1832 186L1850 204M1850 186L1832 204', '#f2c6c4', 8)}
    ${bar(1106, 503, 1106, 486, '#0b570b', '#156f15')}${arrow(1105.500, 477, -90, '#1a7a1e', 10, 4)}${glyph.Y(1104.500, 471)}${bar(1106, 503, 1124, 507, '#9c1515', '#d22')}${arrow(1133, 510, 13, '#d22', 10, 4)}${glyph.X(1134.500, 510.500)}${bar(1106, 503, 1097, 511, '#0c0c96', '#11c')}${arrow(1090, 516, 140, '#11c', 9, 4)}${glyph.Z(1088.500, 518.500)}` },
  front: { box: '243 565 819 441', name: '*Front', nx: 254, ny: 1000, art: `
    ${ln('M243 785H690M724 785H1062', O, 2, 'stroke-dasharray="3 2"')}${ln('M605 785H680', '#f00', 2, 'stroke-dasharray="6 2"')}${arrow(688, 785, 0, '#f00', 8, 3)}
    ${ln('M624 722V800', '#000', 2)}
    ${ln('M526.500 796.500H668.500Q694 798 697.500 811.500V875.500Q696 889 668.500 890.500M624.500 785V866Q627 889 653.500 890.500H697.500M526.500 796.500L545.500 869Q553 890 573.500 890.500H653', '#000', 3)}
    ${nodes([[526.5, 796.5], [555.5, 796.5], [668, 796.5], [697.5, 811.5], [697.5, 875.5], [697.5, 890.5], [668.5, 890.5], [653.5, 890.5], [573.5, 890.5], [545.5, 869], [533.5, 824.5], [624.5, 866], [624.5, 785]])}
    ${plus([[573.5, 861.5], [551.5, 890.5], [653.5, 865.5], [668.5, 875.5], [624.5, 890.5], [697.5, 796.5]])}
    ${ln('M697.500 890V866M697 890.500H706', '#f00', 1.500)}${arrow(697.500, 858, -90, '#f00')}${arrow(715, 890.500, 0, '#f00', 10)}
    ${ln('M690 788.500H666.500V796', '#000', 1)}${arrow(666.500, 796, 90)}
    <text class="w" x="692" y="787">R30</text><text class="w" x="692" y="799">6 PLACES</text>
    ${grab(624.500, 825.500)}${flag(652, 804)}
    ${bar(283, 948, 283, 926, ...V)}${arrow(283, 918, -90, '#117a15', 9, 4)}${glyph.Y(282.500, 911)}${bar(283, 948, 305, 948, ...R)}${arrow(313, 948, 0, '#c11', 9, 4)}${glyph.X(316.500, 948)}<circle cx="283" cy="948" r="5" fill="#10107a"/>` },
  right: { box: '1066 565 820 441', name: '*Right', nx: 1081, ny: 1000, art: `
    ${ln('M1289 785.500H1366', '#f00', 2)}${ln('M1366 785.500H1497', '#00f', 2)}${arrow(1281, 785.500, 180, '#f00')}${ln('M1345 722V807', '#000', 2)}
    ${ln('M1308.500 890.500V824.500Q1312 799 1337 796.500H1569L1405.500 890.500L1345 785', '#000', 3)}
    ${ln('M1345 785L1381 764M1376 767L1400.500 812M1414 834L1435 872M1258 796.500H1305M1258 890.500H1308M1263.500 797V832M1263.500 856V890', '#000', 1)}
    ${arrow(1376, 767, -119, '#000', 10)}${arrow(1435, 872, 61, '#000', 10)}${arrow(1263.500, 797, -90, '#000', 10)}${arrow(1263.500, 890, 90, '#000', 10)}
    <text class="d" x="1393" y="831" font-size="18">125</text><text class="d" font-size="17" transform="translate(1249 848) rotate(8)">100</text>
    ${nodes([[1345, 785], [1336.5, 796.5], [1539, 796.5], [1569, 796.5], [1391, 865.5], [1430.5, 875.5], [1405.5, 890.5], [1308.5, 890.5], [1308.5, 824.5], [1308.5, 865]])}
    ${plus([[1308.5, 796.5], [1337.5, 824.5], [1308.5, 861.5]])}
    ${ln('M1308.500 890V864', '#f00', 2)}${arrow(1308.500, 858, -90, '#f00')}
    ${grab(1367.500, 825.500)}${flag(1520, 804)}
    ${bar(1105, 948, 1105, 926, ...V)}${arrow(1105, 918, -90, '#117a15', 9, 4)}${glyph.Y(1104.500, 911)}${bar(1105, 948, 1083, 948, ...N)}${arrow(1075, 948, 180, '#11c', 9, 4)}${glyph.Z(1070.500, 948)}<circle cx="1105" cy="948" r="5" fill="#a01818"/>` }
};
def('sw-view', `
  :host{display:block;background:#fff;min-width:0;min-height:0;overflow:hidden}
  svg{display:block;width:100%;height:100%}
  text{font-family:"Open Sans",sans-serif}
  .n{font:900 18px Lato,sans-serif}.i{font-style:italic}.w{font:700 12px "DejaVu Sans",sans-serif}.s{font:900 12px Lato,sans-serif}.d{font-family:Lato,sans-serif;font-weight:600}.t{font-weight:900}
  .v{font-size:12px;font-weight:700;fill:#111}
  input{display:block;width:52px;height:20px;border:1px solid #555;margin:0;padding:2px 4px 3px 5px;font:11px/13px "Open Sans",sans-serif;color:#fff;background:linear-gradient(#ff7f40,#ff7f40) right/1px 100% no-repeat content-box content-box,linear-gradient(#0078d7,#0078d7) content-box,#fff}`,
  el => { const v = VIEWS[el.getAttribute('kind')]; return `<svg viewBox="${v.box}">${v.art}<text class="v" x="${v.nx}" y="${v.ny}">${v.name}</text></svg>`; });

def('sw-view-toolbar', `
  :host{display:flex;align-items:center;gap:6px}
  button{display:block;width:20px;height:20px;opacity:.85}
  .eye{display:flex;align-items:center;height:26px;width:38px;border:1px solid #aaa;background:linear-gradient(90deg,#acadaf 26px,#eee 26px);padding-left:3px;gap:3px}`,
  `${['normal', 'zoomfit', 'zoomarea', 'prev', 'section', 'orient', '|', 'cubes', '|', 'eye', 'appear', 'scene', '|', 'monitor', '|'].map(n => n === '|' ? '<sw-drop off></sw-drop>' : n === 'eye' ? `<div class="eye"><button aria-label="eye">${icon('eye')}</button>${drop}</div>` : `<button aria-label="${n}">${icon(n, 19)}</button>`).join('')}`);
def('sw-task-pane', `
  :host{display:flex;flex-direction:column;border:1px solid #858585;border-right:0;width:26px}
  button{height:24px;background:#aeafb1;border-bottom:1px solid #858585;display:flex;align-items:center;justify-content:center}
  button:first-child{background:#d6dade;height:23px}button:last-child{border-bottom:0;height:23px}`,
  ['home', 'library', 'folder', 'palette', 'ball', 'list'].map(n => `<button aria-label="${n}">${icon(n, 19)}</button>`).join(''));
def('sw-tree-root', ':host{display:flex;align-items:center;gap:4px;white-space:pre;font-size:12px} i{width:0;height:0;border:4px solid transparent;border-left:4px solid #111;border-right:0;margin-right:9px}',
  `<i></i>${icon('part', 19)}<span>3DSketchAngle_&amp;  (Defau...</span>`);
def('sw-viewports', `
  :host{display:grid;grid-template:443fr 4px 441fr/819fr 4px 820fr;position:relative;min-width:0;border-right:1px solid #44506c}
  .v{grid-row:1/4;grid-column:2;background:linear-gradient(90deg,#6b7090 1px,#fff 1px 2px,#c8cad2 2px 3px,#3c3c50 3px)}
  .h{grid-column:1/4;grid-row:2;background:linear-gradient(#6b7090 1px,#fff 1px 2px,#c8cad2 2px 3px,#3c3c50 3px);z-index:1}
  sw-view-toolbar{position:absolute;top:24px;left:232px}
  sw-tree-root{position:absolute;top:57px;left:5px}
  sw-task-pane{position:absolute;right:-1px;top:76px}
  .col{position:absolute;right:10px;top:6px;display:flex;gap:8px}`,
  `<sw-view kind="top" style="grid-area:1/1"></sw-view><sw-view kind="tri" style="grid-area:1/3"></sw-view><sw-view kind="front" style="grid-area:3/1"></sw-view><sw-view kind="right" style="grid-area:3/3"></sw-view>
  <div class="v"></div><div class="h"></div><sw-view-toolbar></sw-view-toolbar><sw-tree-root></sw-tree-root>
  <div class="col">${['dockl', 'dockr', 'mincol', 'restcol', 'closecol'].map(n => `<button aria-label="${n}">${icon(n, 18)}</button>`).join('')}</div><sw-task-pane></sw-task-pane>`);

def('sw-view-rail', `
  :host{display:flex;flex-direction:column;align-items:center;padding-top:107px}
  hr{width:32px;margin:0;border:0;border-top:1px solid #808080}
  .dots{width:26px;height:2px;margin:5px 0 8px;background:repeating-linear-gradient(90deg,#888 0 2px,transparent 2px 4px)}
  button{width:27px;height:26px;display:flex;align-items:center;justify-content:center}
  .on{background:#b4b5b7;border:1px solid #707070}hr+button{margin-top:4px}.e{margin-top:2px}`,
  `<hr><div class="dots"></div><button aria-label="Normal to">${icon('normal', 18)}</button><hr class="e">${['vfront', 'vback', 'vleft', 'vright', 'vtop', 'vbottom', 'iso', 'tri', 'di'].map(n => `<button aria-label="${n}"${n === 'vtop' ? ' class="on"' : ''}>${icon(n, 20)}</button>`).join('')}<hr class="e"><button aria-label="Camera">${icon('scope', 18)}</button><hr style="margin-top:7px">`);

/* ---------- bottom bars ---------- */
def('sw-doc-tabs', `
  :host{display:flex;height:16px;padding-left:27px;border:solid #808080;border-width:1px 0}
  .nav{display:flex;width:65px}.nav button{width:16px;height:14px;background:#b4b5b7;border:1px solid #9a9b9d;display:flex;align-items:center;justify-content:center}
  .t{padding:0 11px;background:#adaeb0;border-right:1px solid #858585;line-height:12px;height:14px}
  .on{background:#d6dade;font-weight:700;color:#111}`,
  `<div class="nav">${['first', 'back', 'next', 'last'].map(n => `<button aria-label="${n}">${icon(n, 12)}</button>`).join('')}</div><button class="t on" role="tab">Model</button><button class="t" role="tab">3D Views</button><button class="t" role="tab">Motion Study 1</button>`);
def('sw-status', `
  :host{display:flex;height:17px;align-items:center;padding:1px 4px 0 1px;white-space:pre}
  .p{flex:1}span{margin-left:22px}.m{margin-left:57px}.z{margin-left:4px}.w{margin-left:24px}sw-icon{margin-left:66px}
  i{width:0;height:0;border:3px solid transparent;border-bottom:4px solid #333;border-top:0;margin-left:20px}`,
  `<div class="p">SOLIDWORKS Premium 2019 SP2.0</div><span>-70.198mm</span><span class="w">0.000mm</span><span class="z">-194.250mm</span><span>Fully Defined</span><span>Editing 3DSketch1</span><span class="m">MMGS</span><i></i>${icon('tag', 15)}`);

def('sw-app', `
  :host{display:grid;grid-template-rows:auto auto 1fr auto auto;height:100vh;background:#d6dade}
  main{display:grid;grid-template-columns:243px 1fr 33px;min-height:0;position:relative}
  sw-command-tabs{position:absolute;left:0;top:0;z-index:2}`,
  `<sw-titlebar></sw-titlebar><sw-ribbon></sw-ribbon>
  <main><sw-command-tabs></sw-command-tabs><sw-property-panel></sw-property-panel><sw-viewports></sw-viewports><sw-view-rail></sw-view-rail></main>
  <sw-doc-tabs></sw-doc-tabs><sw-status></sw-status>`);
</script>
</body>
</html>
